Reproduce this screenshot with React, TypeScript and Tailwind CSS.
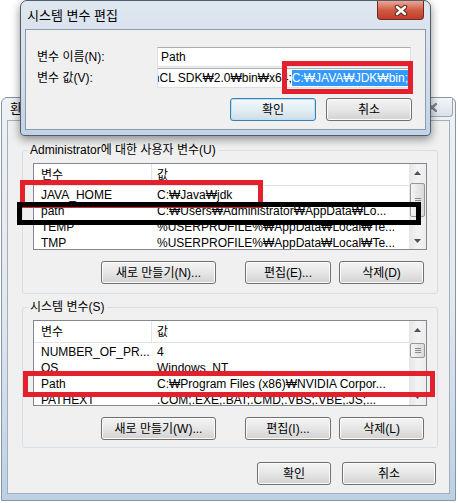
import React from "react"

type Row = { name: string; value: string }

const userVars: Row[] = [
  { name: "JAVA_HOME", value: "C:₩Java₩jdk" },
  { name: "path", value: "C:₩Users₩Administrator₩AppData₩Lo..." },
  { name: "TEMP", value: "%USERPROFILE%₩AppData₩Local₩Te..." },
  { name: "TMP", value: "%USERPROFILE%₩AppData₩Local₩Te..." },
]

const systemVars: Row[] = [
  { name: "NUMBER_OF_PR...", value: "4" },
  { name: "OS", value: "Windows_NT" },
  { name: "Path", value: "C:₩Program Files (x86)₩NVIDIA Corpor..." },
  { name: "PATHEXT", value: ".COM;.EXE;.BAT;.CMD;.VBS;.VBE;.JS;..." },
]

function Button({ label, width, isDefault }: { label: string; width: string; isDefault?: boolean }) {
  return (
    <div
      className={`${width} h-[23px] shrink-0 rounded-[3px] border flex items-center justify-center text-[12px] leading-none text-black ${
        isDefault
          ? "border-[#3c7fb1] bg-linear-to-b from-[#f4f9fc] via-[#e4eef5] to-[#cfdde8] shadow-[inset_0_0_0_1px_#b5e3f7]"
          : "border-[#707070] bg-linear-to-b from-[#f4f4f4] via-[#e6e6e6] to-[#d2d2d2] shadow-[inset_0_0_0_1px_#fcfcfc]"
      }`}
    >
      {label}
    </div>
  )
}

function Arrow({ up }: { up?: boolean }) {
  return (
    <div className="h-[17px] flex items-center justify-center shrink-0">
      <svg width="7" height="4" viewBox="0 0 7 4">
        {up ? <path d="M0 4 L3.5 0 L7 4 Z" fill="#505050" /> : <path d="M0 0 L3.5 4 L7 0 Z" fill="#505050" />}
      </svg>
    </div>
  )
}

function ScrollBar({ thumbTop, thumbHeight }: { thumbTop: string; thumbHeight: string }) {
  return (
    <div className="w-[17px] h-full flex flex-col bg-linear-to-r from-[#e6e6e6] via-[#f3f3f3] to-[#ededed]">
      <Arrow up />
      <div className="flex-1">
        <div
          className={`${thumbTop} ${thumbHeight} mx-[1px] rounded-[2px] border border-[#979797] bg-linear-to-r from-[#f5f5f5] to-[#d9d9d9] flex flex-col items-center justify-center gap-[1px]`}
        >
          <div className="w-[6px] h-px bg-[#8a8a8a]" />
          <div className="w-[6px] h-px bg-[#8a8a8a]" />
          <div className="w-[6px] h-px bg-[#8a8a8a]" />
        </div>
      </div>
      <Arrow />
    </div>
  )
}

function ListView({ rows, height, thumbTop, thumbHeight }: { rows: Row[]; height: string; thumbTop: string; thumbHeight: string }) {
  return (
    <div className={`${height} border border-[#828790] bg-white flex`}>
      <div className="flex-1 overflow-hidden">
        <div className="h-[22px] flex items-center border-b border-[#e3e3e3]">
          <div className="w-[118px] pl-[7px] h-full flex items-center border-r border-[#e5e5e5]">변수</div>
          <div className="pl-[5px]">값</div>
        </div>
        <div className="mt-[1px]">
          {rows.map(r => (
            <div key={r.name} className="h-[16px] flex items-center whitespace-nowrap">
              <div className="w-[118px] pl-[7px]">{r.name}</div>
              <div className="pl-[5px]">{r.value}</div>
            </div>
          ))}
        </div>
      </div>
      <ScrollBar thumbTop={thumbTop} thumbHeight={thumbHeight} />
    </div>
  )
}

function CloseX({ color, outline }: { color: string; outline: string }) {
  return (
    <svg width="14" height="11" viewBox="0 0 14 11">
      <path d="M3 2 L11 9 M11 2 L3 9" stroke={outline} strokeWidth="4.5" strokeLinecap="round" />
      <path d="M3 2 L11 9 M11 2 L3 9" stroke={color} strokeWidth="2.5" strokeLinecap="round" />
    </svg>
  )
}

export default function App() {
  return (
    <div className="relative w-[458px] h-[503px] bg-white overflow-hidden text-[12px] text-black font-['Liberation_Sans','Noto_Sans_CJK_KR',sans-serif]">
      {/* back window: 환경 변수 */}
      <div className="absolute left-[1px] top-[97px] w-[455px] h-[404px] rounded-t-[6px] border border-[#8795a4] bg-linear-to-b from-[#eef1f5] via-[#e3e9f0] to-[#bcd0e4] px-[5px] pb-[6px] flex flex-col">
        <div className="h-[22px] flex items-center justify-between">
          <span className="pl-[3px] text-[13px]">환경 변수</span>
          <div className="w-[43px] h-[19px] self-start -mr-[3px] rounded-b-[4px] border border-t-0 border-[#9aa6b2] bg-linear-to-b from-[#f4f6f8] to-[#dbe2ea] flex items-center justify-center">
            <CloseX color="#7a8896" outline="#f4f6f8" />
          </div>
        </div>
        <div className="flex-1 border border-[#a3afbc] bg-[#f0f0f0] pl-[14px] pr-[11px] pt-[21px] flex flex-col">
          <fieldset className="border border-[#d5dfe5] rounded-[3px] p-0 m-0">
            <legend className="ml-[5px] px-[2px] leading-[16px]">Administrator에 대한 사용자 변수(U)</legend>
            <div className="px-[10px] pb-[9px]">
              <div className="mt-[5px]">
                <ListView rows={userVars} height="h-[87px]" thumbTop="mt-[2px]" thumbHeight="h-[34px]" />
              </div>
              <div className="mt-[11px] flex justify-end pr-[3px]">
                <div className="mr-[29px]"><Button label="새로 만들기(N)..." width="w-[115px]" /></div>
                <div className="mr-[8px]"><Button label="편집(E)..." width="w-[86px]" /></div>
                <Button label="삭제(D)" width="w-[85px]" />
              </div>
            </div>
          </fieldset>

          <fieldset className="mt-[5px] border border-[#d5dfe5] rounded-[3px] p-0 m-0">
            <legend className="ml-[5px] px-[2px] leading-[16px]">시스템 변수(S)</legend>
            <div className="px-[10px] pb-[7px]">
              <div className="mt-[5px]">
                <ListView rows={systemVars} height="h-[86px]" thumbTop="mt-[5px]" thumbHeight="h-[15px]" />
              </div>
              <div className="mt-[11px] flex justify-end pr-[3px]">
                <div className="mr-[29px]"><Button label="새로 만들기(W)..." width="w-[115px]" /></div>
                <div className="mr-[8px]"><Button label="편집(I)..." width="w-[86px]" /></div>
                <Button label="삭제(L)" width="w-[85px]" />
              </div>
            </div>
          </fieldset>

          <div className="mt-[14px] flex justify-end pr-[2px] gap-[11px]">
            <Button label="확인" width="w-[74px]" />
            <Button label="취소" width="w-[94px]" />
          </div>
        </div>
      </div>

      {/* front dialog: 시스템 변수 편집 */}
      <div className="absolute left-[20px] top-0 w-[411px] h-[136px] rounded-t-[7px] rounded-b-[4px] border border-[#4f5d6d] bg-linear-to-b from-[#dfe7f0] via-[#d4dfeb] to-[#c2d3e6] px-[4px] pb-[5px] flex flex-col shadow-[0_3px_10px_rgba(0,0,0,0.45)]">
        <div className="h-[28px] flex items-center justify-between">
          <span className="pl-[2px] text-[13px] pt-[1px]">시스템 변수 편집</span>
          <div className="w-[47px] h-[19px] self-start mr-[2px] rounded-b-[4px] border border-t-0 border-[#6b2c24] bg-linear-to-b from-[#e9a896] via-[#d25a43] to-[#c23c28] flex items-center justify-center">
            <CloseX color="#ffffff" outline="#5a2a22" />
          </div>
        </div>
        <div className="flex-1 border border-[#8a9bb0] bg-[#f0f0f0] pl-[11px] pr-[13px] pt-[17px]">
          <div className="flex items-center h-[20px]">
            <div className="w-[120px]">변수 이름(N):</div>
            <div className="w-[254px] h-[20px] border border-[#dbdfe6] border-t-[#abadb3] bg-white flex items-center px-[3px]">Path</div>
          </div>
          <div className="flex items-center h-[20px] mt-[1px]">
            <div className="w-[120px]">변수 값(V):</div>
            <div className="w-[254px] h-[20px] border border-[#dbdfe6] border-t-[#abadb3] bg-white flex items-center justify-end overflow-hidden whitespace-nowrap pr-[2px]">
              <span>OpenCL SDK₩2.0₩bin₩x64;</span>
              <span className="bg-[#3399ff] text-white leading-[16px]">C:₩JAVA₩JDK₩bin;</span>
            </div>
          </div>
          <div className="mt-[10px] flex justify-end gap-[10px]">
            <Button label="확인" width="w-[86px]" isDefault />
            <Button label="취소" width="w-[86px]" />
          </div>
        </div>
      </div>

      {/* annotation boxes */}
      <div className="absolute left-[282px] top-[61px] w-[131px] h-[33px] border-[5px] border-[#e3202b]" />
      <div className="absolute left-[20px] top-[180px] w-[243px] h-[28px] border-[5px] border-[#e3202b]" />
      <div className="absolute left-[17px] top-[202px] w-[404px] h-[23px] border-[5px] border-black" />
      <div className="absolute left-[23px] top-[371px] w-[412px] h-[26px] border-[5px] border-[#e3202b]" />
    </div>
  )
}
